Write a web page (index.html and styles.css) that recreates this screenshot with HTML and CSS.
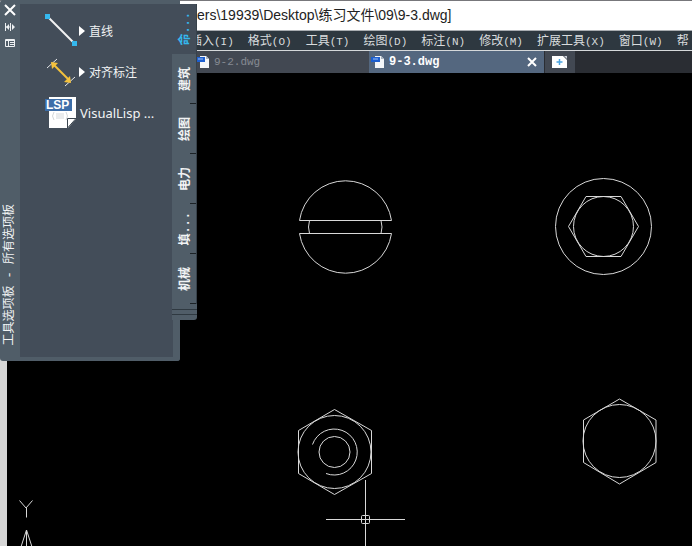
FILE: index.html
```html
<!DOCTYPE html>
<html lang="zh-CN">
<head>
    <meta charset="UTF-8">
    <meta name="viewport" content="width=device-width, initial-scale=1.0">
    <title>9-3.dwg</title>
    <link rel="stylesheet" href="styles.css">
</head>
<body>
    <div class="app">
        <header class="titlebar">sers\19939\Desktop\练习文件\09\9-3.dwg]</header>

        <nav class="menubar">
            <button>插入<span class="key">(I)</span></button>
            <button>格式<span class="key">(O)</span></button>
            <button>工具<span class="key">(T)</span></button>
            <button>绘图<span class="key">(D)</span></button>
            <button>标注<span class="key">(N)</span></button>
            <button>修改<span class="key">(M)</span></button>
            <button>扩展工具<span class="key">(X)</span></button>
            <button>窗口<span class="key">(W)</span></button>
            <button>帮</button>
        </nav>

        <div class="doc-tabs">
            <button class="doc-tab">
                <svg class="doc-icon" width="14" height="14" viewBox="0 0 14 14">
                    <path d="M4 1h6l3 3v9H4z" fill="#f4f6f8"/>
                    <path d="M10 1v3h3z" fill="#aab4c0"/>
                    <rect x="0" y="2" width="9" height="5" fill="#1d5fd0"/>
                    <path d="M2 4h5" stroke="#9cc0f5"/>
                </svg>
                <span>9-2.dwg</span>
            </button>
            <button class="doc-tab active">
                <svg class="doc-icon" width="14" height="14" viewBox="0 0 14 14">
                    <path d="M4 1h6l3 3v9H4z" fill="#f4f6f8"/>
                    <path d="M10 1v3h3z" fill="#aab4c0"/>
                    <rect x="0" y="2" width="9" height="5" fill="#1d5fd0"/>
                    <path d="M2 4h5" stroke="#9cc0f5"/>
                </svg>
                <span>9-3.dwg</span>
                <svg class="doc-close" width="10" height="10" viewBox="0 0 10 10">
                    <path d="M1 1l8 8M9 1l-8 8" stroke="#fff" stroke-width="2"/>
                </svg>
            </button>
            <button class="new-tab" aria-label="新建">
                <svg width="16" height="12" viewBox="0 0 16 12">
                    <path d="M0 0h11l4 4v8H0z" fill="#fff"/>
                    <path d="M12 0l3 3V0z" fill="#c9ced6"/>
                    <path d="M7.500 3v6M4.500 6h6" stroke="#4aa3e0" stroke-width="1.500"/>
                </svg>
            </button>
        </div>

        <main class="canvas">
            <svg class="drawing" width="100%" height="100%">
                <g transform="translate(-7 -73)" fill="none" stroke="#d8d8d8">
                    <!-- slotted screw head -->
                    <path d="M299.500 220.500A46.500 46.500 0 0 1 391.500 220.500zM299.500 233.500A46.500 46.500 0 0 0 391.500 233.500z"/>
                    <path d="M309.500 220.500Q307.500 227 309.500 233.500M381 220.500Q383 227 381 233.500"/>

                    <!-- socket screw head -->
                    <circle cx="603.500" cy="226.500" r="48"/>
                    <circle cx="603.500" cy="226.500" r="30"/>
                    <path d="M568.500 226.500L586 196.500H621L638.500 226.500L621 256.500H586z"/>

                    <!-- nut with thread -->
                    <path d="M334.500 409.500L371.500 430.500V473.500L334.500 494.500L298.500 473.500V430.500z"/>
                    <circle cx="334.500" cy="452" r="36.500"/>
                    <circle cx="334.500" cy="452" r="15.500"/>
                    <path d="M312.500 444.500A23 23 0 1 1 326 473.500"/>

                    <!-- bolt head -->
                    <path d="M619.500 399L656 420V462.500L619.500 484L583.500 462.500V420z"/>
                    <circle cx="619.500" cy="441" r="36.500"/>

                    <!-- crosshair -->
                    <path d="M326 519.500H405M365.500 480V560"/>
                    <rect x="361.500" y="515.500" width="8" height="8" rx="1"/>

                    <!-- UCS axis -->
                    <path d="M19.500 500.500L26 508L32.500 500.500M26.500 508V517.500"/>
                    <path d="M26.500 530V560M26.500 530L18 556M26.500 530L35 556"/>
                </g>
            </svg>
        </main>
    </div>

    <aside class="palette">
        <div class="palette-bar">
            <button aria-label="关闭">
                <svg width="12" height="12" viewBox="0 0 12 12"><path d="M1 1l10 10M11 1L1 11" stroke="#fff" stroke-width="2"/></svg>
            </button>
            <button aria-label="自动隐藏">
                <svg width="12" height="10" viewBox="0 0 12 10"><path d="M1.500 1v8M2 5h4M6.500 1v8" stroke="#eef1f3" fill="none"/><path d="M2 5l3-3v6zM8 2l3 3-3 3z" fill="#eef1f3"/></svg>
            </button>
            <button aria-label="特性">
                <svg width="12" height="10" viewBox="0 0 12 10"><path d="M1.500 1.500h9v7h-9zM1 2.500h10M4.500 2v6M6 4.500h4M6 6.500h4" stroke="#eef1f3" fill="none"/></svg>
            </button>
            <span class="palette-title">工具选项板 - 所有选项板</span>
        </div>

        <div class="tools">
            <button class="tool">
                <svg class="tool-icon" width="34" height="34" viewBox="0 0 34 34">
                    <path d="M3 3l27 27" stroke="#f2f2f2" stroke-width="2"/>
                    <rect x="0" y="0" width="5" height="5" fill="#35b8ee"/>
                    <rect x="27" y="27" width="5" height="5" fill="#35b8ee"/>
                </svg>
                <span class="flyout"></span>
                <span>直线</span>
            </button>
            <button class="tool">
                <svg class="tool-icon" width="34" height="34" viewBox="0 0 34 34">
                    <path d="M2 13l10-9M20 31l10-9" stroke="#e4e6e8"/>
                    <path d="M9 10l15 15" stroke="#f3c03c" stroke-width="2"/>
                    <path d="M6 7l7 1-6 6zM26 28l-7-1 6-6z" fill="#f3c03c"/>
                </svg>
                <span class="flyout"></span>
                <span>对齐标注</span>
            </button>
            <button class="tool">
                <svg class="tool-icon" width="34" height="34" viewBox="0 0 34 34">
                    <path d="M4 1h27v22l-8 9H4z" fill="#fff"/>
                    <path d="M22.500 32v-9.500H31z" fill="#fff" stroke="#3a444e"/>
                    <path d="M9 16q-3 4 0 8M21 16q3 4 0 8M11 18h8M11 20h8M11 22h8" stroke="#d3d7da" fill="none"/>
                    <rect x="0" y="3" width="27" height="12" fill="#3d6ea8"/>
                    <text class="lsp" x="1" y="13">LSP</text>
                </svg>
                <span>VisualLisp ...</span>
            </button>
        </div>

        <div class="side-tabs">
            <button class="side-tab active"><span>命...</span></button>
            <button class="side-tab"><span>建筑</span></button>
            <button class="side-tab"><span>绘图</span></button>
            <button class="side-tab"><span>电力</span></button>
            <button class="side-tab"><span>填...</span></button>
            <button class="side-tab"><span>机械</span></button>
            <div class="more-tabs"></div>
        </div>
    </aside>
</body>
</html>
```

FILE: styles.css
```css
* {
    box-sizing: border-box;
}
body {
    margin: 0;
    background: #000;
    font-family: "Noto Sans", "Noto Sans CJK SC", sans-serif;
}
button {
    margin: 0;
    padding: 0;
    border: 0;
    background: none;
    color: inherit;
    font: inherit;
    white-space: nowrap;
}
svg {
    display: block;
    flex: none;
}

.app {
    display: flex;
    flex-direction: column;
    height: 100vh;
    overflow: hidden;
}
.titlebar {
    height: 31px;
    padding-left: 190px;
    border-top: 1px solid #77777b;
    border-bottom: 1px solid #a9adb1;
    background: #fff;
    color: #222;
    font-family: "Liberation Sans", "Noto Sans CJK SC", sans-serif;
    font-size: 14px;
    line-height: 29px;
    white-space: nowrap;
}
.menubar {
    display: flex;
    gap: 14px;
    height: 20px;
    padding-left: 190px;
    border-bottom: 1px solid #d5d8da;
    background: #2e3840;
    color: #d9dcde;
    font-family: "Noto Sans CJK SC", sans-serif;
    font-size: 12px;
    line-height: 17px;
}
.menubar button {
    height: 17px;
}
.key {
    font-family: "Liberation Mono", monospace;
    font-size: 11px;
}
.doc-tabs {
    display: flex;
    height: 22px;
    padding-left: 188px;
    background: #2a2d33;
}
.doc-tab {
    display: flex;
    align-items: center;
    gap: 4px;
    width: 181px;
    padding: 0 8px;
    background: #424852;
    color: #868b93;
    font-family: "Liberation Mono", monospace;
    font-size: 11px;
}
.doc-tab.active {
    width: 175px;
    padding: 0 7px 0 2px;
    background: #54677f;
    color: #fff;
    font-size: 12px;
    font-weight: bold;
}
.doc-close {
    margin-left: auto;
}
.new-tab {
    margin-left: 1px;
    padding: 0 7px;
    background: #424852;
}
.canvas {
    flex: 1;
    min-height: 0;
    border-left: 7px solid #d6d6d6;
    background: #000;
}

/* floating tool palette, over the drawing window */
.palette {
    position: absolute;
    top: 0;
    left: 0;
    display: flex;
    height: 361px;
    color: #f1f3f4;
}
.palette-bar {
    display: flex;
    flex-direction: column;
    align-items: center;
    gap: 6px;
    width: 20px;
    padding: 4px 0 15px;
    border-radius: 3px 0 0 3px;
    background: #505d68;
}
.palette-title {
    margin-top: auto;
    writing-mode: vertical-rl;
    text-orientation: sideways;
    transform: rotate(180deg);
    font-family: "Liberation Mono", "Noto Sans CJK SC", monospace;
    font-size: 12px;
    line-height: 16px;
}
.tools {
    width: 160px;
    padding: 10px 0 0 25px;
    border: solid #505d68;
    border-width: 4px 7px 4px 0;
    border-bottom-right-radius: 3px;
    background: #434d59;
}
.tool {
    display: flex;
    align-items: center;
    height: 34px;
    margin-bottom: 7px;
    font-size: 12px;
}
.tool-icon + span:last-child {
    margin-left: 1px;
    font-size: 13px;
}
.lsp {
    fill: #fff;
    font-family: "Liberation Sans", sans-serif;
    font-size: 12px;
    font-weight: bold;
}
.flyout {
    margin: 0 4px 0 0;
    border: solid transparent;
    border-width: 5px 0 5px 6px;
    border-left-color: #fff;
}
.side-tabs {
    width: 25px;
    height: 321px;
    margin: 4px 0 0 -8px;
    font-family: "Liberation Mono", "Noto Sans CJK SC", monospace;
    font-size: 12px;
    font-weight: bold;
}
.side-tab {
    display: flex;
    align-items: center;
    justify-content: center;
    width: 25px;
    height: 50px;
    border-right: 1px solid #38424b;
    background: linear-gradient(#1c2226, #1c2226) right bottom / 6px 1px no-repeat #505d68;
}
.side-tab span {
    writing-mode: vertical-rl;
    text-orientation: sideways;
    transform: rotate(180deg);
}
.side-tab.active {
    background: #434d59;
    color: #35b8ee;
}
.more-tabs {
    height: 16px;
    border-bottom-right-radius: 3px;
    background: linear-gradient(#2f3941, #2f3941) 0 5px / 100% 1px no-repeat, linear-gradient(#2f3941, #2f3941) 0 10px / 100% 1px no-repeat #505d68;
}
```
